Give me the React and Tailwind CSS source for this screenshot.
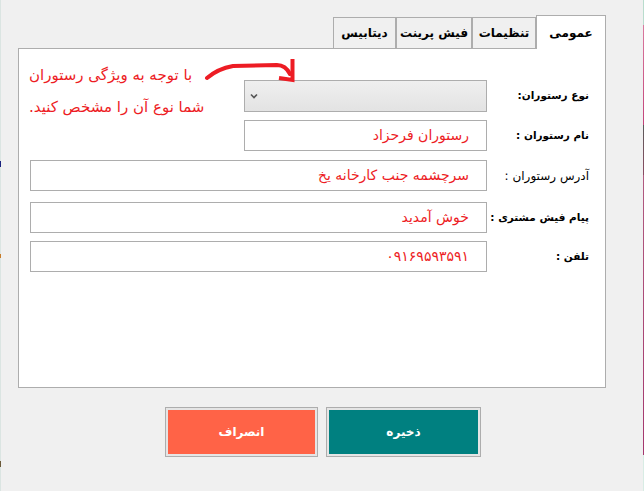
import React from "react";

const fa = { fontFamily: '"DejaVu Sans", "Noto Sans", sans-serif' };

function Tab({ label, active, w }) {
  if (active) {
    return (
      <div
        className={`${w} h-[34px] -mb-px relative z-10 bg-white border-t border-l border-r border-[#adadad] flex items-center justify-center text-[12px] font-bold text-black`}
      >
        {label}
      </div>
    );
  }
  return (
    <div
      className={`${w} h-[31px] bg-[#f0f0f0] border-t border-l border-r border-[#adadad] flex items-center justify-center text-[12px] font-bold text-black`}
    >
      {label}
    </div>
  );
}

function Row({ label, children, className = "", bold = true }) {
  return (
    <div className={`flex items-center ${className}`}>
      <div
        className={`w-[102px] text-black text-right whitespace-nowrap ${
          bold ? "text-[10.5px] font-bold" : "text-[12px] font-normal"
        }`}
      >
        {label}
      </div>
      {children}
    </div>
  );
}

function TextBox({ value, w, h = "h-[31px]" }) {
  return (
    <div
      className={`${w} ${h} border border-[#adadad] bg-white flex items-center pr-[17px] text-[14px] text-[#ed1c24] whitespace-nowrap`}
    >
      {value}
    </div>
  );
}

export default function App() {
  return (
    <div
      className="relative w-[644px] h-[491px] bg-[#f0f0f0] flex overflow-hidden"
      style={fa}
    >
      {/* left edge strip */}
      <div className="w-px h-full bg-[#dbe5e2] flex flex-col">
        <div className="h-[161px]" />
        <div className="h-[6px] bg-[#1a237e]" />
        <div className="h-[87px]" />
        <div className="h-[4px] bg-[#c77b2a]" />
        <div className="h-[203px]" />
        <div className="h-[6px] bg-[#6b5a3a]" />
      </div>

      <div className="w-[642px] flex flex-col">
        {/* tabs */}
        <div dir="rtl" className="h-[48px] pt-[15px] pr-[37px] flex items-end">
          <Tab label="عمومی" active w="w-[70px]" />
          <Tab label="تنظیمات" w="w-[64px]" />
          <Tab label="فیش پرینت" w="w-[76px]" />
          <Tab label="دیتابیس" w="w-[63px]" />
        </div>

        {/* panel */}
        <div className="ml-[17px] w-[588px] h-[340px] border border-[#adadad] bg-white">
          <div dir="rtl" className="pr-[16px] pt-[10px] flex flex-col">
            <div className="flex">
              <div className="flex flex-col pt-[21px]">
                <Row label="نوع رستوران:">
                  <div className="w-[243px] h-[32px] border border-[#adadad] bg-gradient-to-b from-[#efefef] to-[#e3e3e3] flex items-center justify-end pl-[5px]">
                    <svg width="8" height="6" viewBox="0 0 8 6">
                      <path d="M1 1.5 L4 4.5 L7 1.5" fill="none" stroke="#555" strokeWidth="1.6" />
                    </svg>
                  </div>
                </Row>
                <Row label="نام رستوران :" className="mt-[8px]">
                  <TextBox value="رستوران فرحزاد" w="w-[243px]" />
                </Row>
              </div>
              <div className="flex-1 pl-[10px] text-left text-[15px] leading-[32px] text-[#ed1c24]">
                <div className="text-left">با توجه به ویژگی رستوران</div>
                <div className="text-left">شما نوع آن را مشخص کنید.</div>
              </div>
            </div>
            <Row label="آدرس رستوران :" bold={false} className="mt-[9px]">
              <TextBox value="سرچشمه جنب کارخانه یخ" w="w-[457px]" />
            </Row>
            <Row label="پیام فیش مشتری :" className="mt-[11px]">
              <TextBox value="خوش آمدید" w="w-[457px]" />
            </Row>
            <Row label="تلفن :" className="mt-[8px]">
              <TextBox value="۰۹۱۶۹۵۹۳۵۹۱" w="w-[457px]" />
            </Row>
          </div>
        </div>

        {/* buttons */}
        <div className="mt-[19px] ml-[164px] flex gap-[8px]">
          <div className="w-[153px] h-[50px] border border-[#adadad] p-[2px] bg-[#e5e5e5]">
            <div className="w-full h-full bg-[#ff6347] flex items-center justify-center text-white text-[12px] font-bold">
              انصراف
            </div>
          </div>
          <div className="w-[155px] h-[50px] border border-[#adadad] p-[2px] bg-[#e5e5e5]">
            <div className="w-full h-full bg-[#008080] flex items-center justify-center text-white text-[12px] font-bold">
              ذخیره
            </div>
          </div>
        </div>
      </div>

      {/* right edge strip */}
      <div className="w-px h-full flex flex-col">
        <div className="h-[25px] bg-[#b9dccd]" />
        <div className="h-[100px] bg-gradient-to-b from-[#d9799f] to-[#c2427a]" />
        <div className="h-[50px] bg-gradient-to-b from-[#5a5a5a] to-[#8a4a62]" />
        <div className="h-[280px] bg-gradient-to-b from-[#b05a80] to-[#a4366e]" />
        <div className="flex-1 bg-[#d8ece4]" />
      </div>

      {/* annotation arrow */}
      <svg
        className="absolute left-0 top-0 pointer-events-none"
        width="644"
        height="491"
        viewBox="0 0 644 491"
      >
        <path
          d="M207 78 C214 72 222 68 233 66 L277 65 C283 65 287 68 290 74"
          fill="none"
          stroke="#ed1c24"
          strokeWidth="4"
          strokeLinecap="round"
        />
        <path
          d="M292.5 59 L292.5 80 L279 78"
          fill="none"
          stroke="#ed1c24"
          strokeWidth="4"
          strokeLinejoin="miter"
        />
      </svg>
    </div>
  );
}
